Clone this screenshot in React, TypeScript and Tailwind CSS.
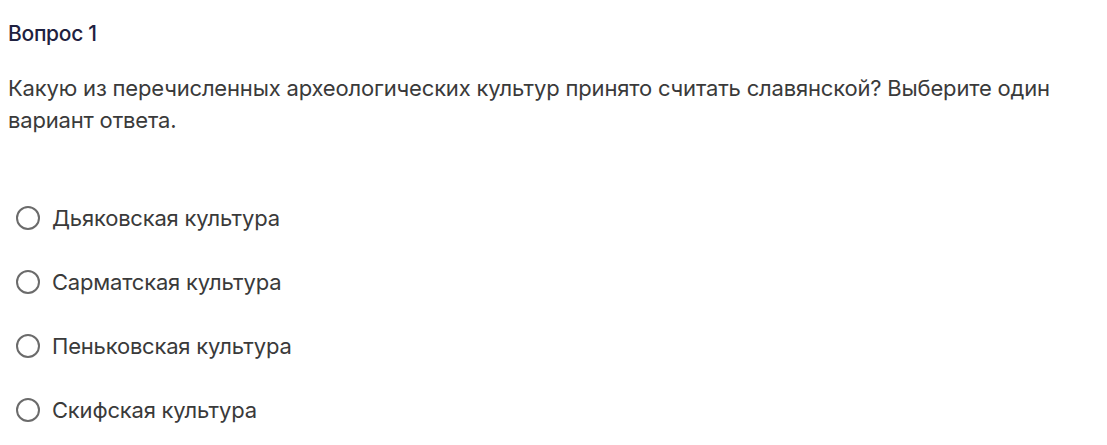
const options = [
  'Дьяковская культура',
  'Сарматская культура',
  'Пеньковская культура',
  'Скифская культура',
];

export default function App() {
  return (
    <div className="w-[1107px] h-[445px] bg-white font-['Inter',sans-serif] overflow-hidden">
      <div className="px-2 pt-[22px]">
        <h2 className="text-[21px] leading-[24px] font-medium text-[#1f2140] tracking-[-0.3px]">
          Вопрос 1
        </h2>
        <p className="mt-[26px] text-[22px] leading-[32px] text-[#3a3a3a] tracking-[-0.18px] max-w-[1080px]">
          Какую из перечисленных археологических культур принято считать славянской? Выберите один
          вариант ответа.
        </p>
        <div className="mt-[68px] flex flex-col gap-[36px] pl-2">
          {options.map((label) => (
            <label key={label} className="flex items-center gap-3 h-[28px]">
              <span className="w-6 h-6 rounded-full border-2 border-[#6b6b6b] shrink-0" />
              <span className="text-[22px] leading-[28px] text-[#3a3a3a] tracking-[-0.2px]">{label}</span>
            </label>
          ))}
        </div>
      </div>
    </div>
  );
}
